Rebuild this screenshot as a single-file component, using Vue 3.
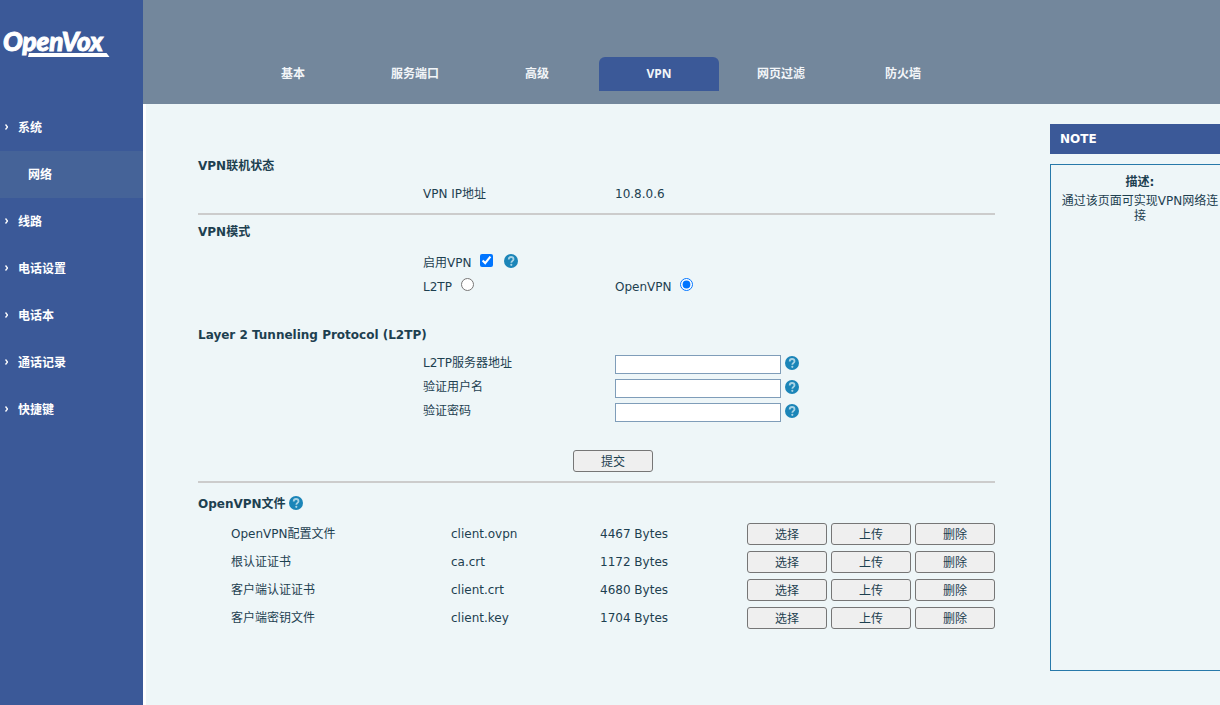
<script setup>
import { ref } from 'vue'

const menu = ['系统', '网络', '线路', '电话设置', '电话本', '通话记录', '快捷键']
const tabs = ['基本', '服务端口', '高级', 'VPN', '网页过滤', '防火墙']
const activeMenu = '网络'
const activeTab = 'VPN'

const enabled = ref(true)
const mode = ref('openvpn')
const fields = ref([
  { id: 'server', label: 'L2TP服务器地址', type: 'text', value: '' },
  { id: 'user', label: '验证用户名', type: 'text', value: '' },
  { id: 'password', label: '验证密码', type: 'password', value: '' },
])
const files = [
  { label: 'OpenVPN配置文件', name: 'client.ovpn', size: '4467 Bytes' },
  { label: '根认证证书', name: 'ca.crt', size: '1172 Bytes' },
  { label: '客户端认证证书', name: 'client.crt', size: '4680 Bytes' },
  { label: '客户端密钥文件', name: 'client.key', size: '1704 Bytes' },
]
const actions = ['选择', '上传', '删除']
</script>

<template>
  <svg width="0" height="0" class="defs" aria-hidden="true">
    <symbol id="help" viewBox="0 0 14 14">
      <circle cx="7" cy="7" r="7" fill="#1b85b8" />
      <path d="M4.700 5.500C4.700 3.900 5.600 3 7 3s2.500.900 2.500 2.200c0 1.600-2.200 1.700-2.200 3.500" fill="none" stroke="#a9d3e5" stroke-width="1.800" />
      <circle cx="7.300" cy="10.800" r="1.100" fill="#a9d3e5" />
    </symbol>
  </svg>
  <div class="page">
    <aside class="sidebar">
      <a class="brand" href="#">
        <svg width="110" height="34" viewBox="0 0 110 34" role="img" aria-label="OpenVox">
          <text x="2" y="25" class="brand-text">OpenVox</text>
          <path d="M28 27H105.500L108.500 31H27Z" fill="#fff" />
        </svg>
      </a>
      <nav class="menu">
        <a v-for="item in menu" :key="item" href="#" :class="{ current: item === activeMenu }">
          <svg v-if="item !== activeMenu" class="arrow" width="3" height="7" viewBox="0 0 3 7" aria-hidden="true">
            <path d="M.5.5 2.500 3 .5 5.500" fill="none" stroke="#fff" stroke-width="1.300" />
          </svg>
          {{ item }}
        </a>
      </nav>
    </aside>

    <div class="body">
      <header class="topbar">
        <nav class="tabs">
          <a v-for="tab in tabs" :key="tab" href="#" :class="{ current: tab === activeTab }">{{ tab }}</a>
        </nav>
      </header>

      <div class="workspace">
        <main class="content">
          <h2>VPN联机状态</h2>
          <div class="row status">
            <span>VPN IP地址</span>
            <span>10.8.0.6</span>
          </div>
          <hr />

          <form @submit.prevent>
            <h2 class="after-rule">VPN模式</h2>
            <div class="row first">
              <div class="choice">
                <label for="enable">启用VPN</label>
                <input id="enable" v-model="enabled" type="checkbox" />
                <svg class="help spaced"><use href="#help" /></svg>
              </div>
            </div>
            <div class="row">
              <div class="choice">
                <label for="l2tp">L2TP</label>
                <input id="l2tp" v-model="mode" type="radio" name="mode" value="l2tp" />
              </div>
              <div class="choice">
                <label for="openvpn">OpenVPN</label>
                <input id="openvpn" v-model="mode" type="radio" name="mode" value="openvpn" />
              </div>
            </div>

            <h2 class="protocol">Layer 2 Tunneling Protocol (L2TP)</h2>
            <div v-for="field in fields" :key="field.id" class="row field">
              <label :for="field.id">{{ field.label }}</label>
              <div class="entry">
                <input :id="field.id" v-model="field.value" :type="field.type" />
                <svg class="help"><use href="#help" /></svg>
              </div>
            </div>
            <div class="submit">
              <button type="submit">提交</button>
            </div>
          </form>
          <hr />

          <h2 class="files-title">OpenVPN文件 <svg class="help"><use href="#help" /></svg></h2>
          <table>
            <tbody>
              <tr v-for="file in files" :key="file.name">
                <th scope="row">{{ file.label }}</th>
                <td>{{ file.name }}</td>
                <td>{{ file.size }}</td>
                <td>
                  <div class="actions">
                    <button v-for="action in actions" :key="action" type="button">{{ action }}</button>
                  </div>
                </td>
              </tr>
            </tbody>
          </table>
        </main>

        <aside class="note">
          <h3>NOTE</h3>
          <div class="note-box">
            <strong>描述:</strong>
            <p>通过该页面可实现VPN网络连接</p>
          </div>
        </aside>
      </div>
    </div>
  </div>
</template>

<style>
html,
body {
  overflow-x: hidden;
}
</style>

<style scoped>
* {
  box-sizing: border-box;
}
.defs {
  position: absolute;
}
.page {
  display: flex;
  min-height: 100vh;
  overflow: hidden;
  background: #eef6f8;
  color: #1d4050;
  font: 12px/20px "DejaVu Sans", "Noto Sans CJK SC", sans-serif;
}
a {
  color: inherit;
  text-decoration: none;
}
.sidebar {
  flex: 0 0 143px;
  background: #3b5998;
  color: #fff;
}
.brand {
  display: block;
  height: 104px;
  padding: 26px 0 0 1px;
}
.brand svg {
  display: block;
}
.brand-text {
  fill: #fff;
  stroke: #fff;
  stroke-width: 1px;
  font: italic 900 26px Lato, sans-serif;
}
.menu a {
  display: flex;
  align-items: center;
  gap: 10px;
  height: 47px;
  padding-left: 5px;
  font-weight: bold;
}
.menu .current {
  padding-left: 28px;
  background: #456398;
}
.body {
  flex: 1;
  min-width: 0;
  display: flex;
  flex-direction: column;
}
.topbar {
  height: 104px;
  padding: 57px 0 0 90px;
  background: #73879c;
}
.tabs {
  display: flex;
  gap: 2px;
}
.tabs a {
  width: 120px;
  color: #f2f5f8;
  font: bold 12px/34px "Noto Sans", "Noto Sans CJK SC", sans-serif;
  text-align: center;
}
.tabs .current {
  border-radius: 6px 6px 0 0;
  background: #3b5998;
}
.workspace {
  flex: 1;
  display: grid;
  grid-template-columns: 1fr 180px;
  gap: 55px;
  min-width: 1087px;
  padding: 20px 0 34px 52px;
  border-left: 3px solid #fff;
}
.content {
  padding-top: 32px;
}
h2 {
  margin: 0;
  font-size: 12px;
  line-height: 20px;
}
hr {
  height: 2px;
  margin: 0;
  border: 0;
  background: #ccc;
}
.row {
  display: grid;
  grid-template-columns: 192px 1fr;
  align-items: center;
  height: 24px;
  padding-left: 225px;
}
.status {
  height: 37px;
  padding-bottom: 2px;
}
.after-rule {
  margin-top: 7px;
}
.first {
  margin-top: 9px;
}
.choice,
.entry {
  display: flex;
  align-items: center;
}
.choice input {
  width: 13px;
  height: 13px;
  margin: 0 0 5px 9px;
}
.help {
  display: block;
  flex: none;
  width: 14px;
  height: 14px;
}
.spaced {
  margin: 0 0 4px 11px;
}
.protocol {
  margin: 26px 0 7px;
}
.field label,
.entry .help {
  margin-bottom: 2px;
}
.entry {
  gap: 4px;
}
.entry input {
  width: 166px;
  height: 19px;
  padding: 1px 2px;
  border: 1px solid #7f9db9;
  background: #fff;
  color: inherit;
  font: inherit;
}
.submit {
  display: flex;
  justify-content: center;
  padding: 26px 0 9px 33px;
}
button {
  flex: none;
  width: 80px;
  height: 22px;
  padding: 2px 0 0;
  border: 1px solid #767676;
  border-radius: 3px;
  background: #efefef;
  color: inherit;
  font: inherit;
  line-height: 18px;
}
.files-title {
  display: flex;
  align-items: center;
  gap: 3px;
  margin: 11px 0 6px;
}
.files-title .help {
  margin-bottom: 2px;
}
table {
  width: 100%;
  table-layout: fixed;
  border-collapse: collapse;
}
tr {
  height: 28px;
}
th,
td {
  width: 149px;
  padding: 0;
  font-weight: normal;
  text-align: left;
}
th {
  width: 253px;
  padding-left: 33px;
}
td:last-child {
  width: auto;
}
.actions {
  display: flex;
  justify-content: flex-end;
  gap: 4px;
}
.note h3 {
  margin: 0 0 10px;
  padding-left: 10px;
  background: #3b5998;
  color: #fff;
  font-size: 12px;
  line-height: 30px;
}
.note-box {
  min-height: 507px;
  padding: 10px;
  border: 1px solid #2779aa;
  line-height: 15px;
  text-align: center;
}
.note-box p {
  margin: 4px 0 0;
}
</style>
